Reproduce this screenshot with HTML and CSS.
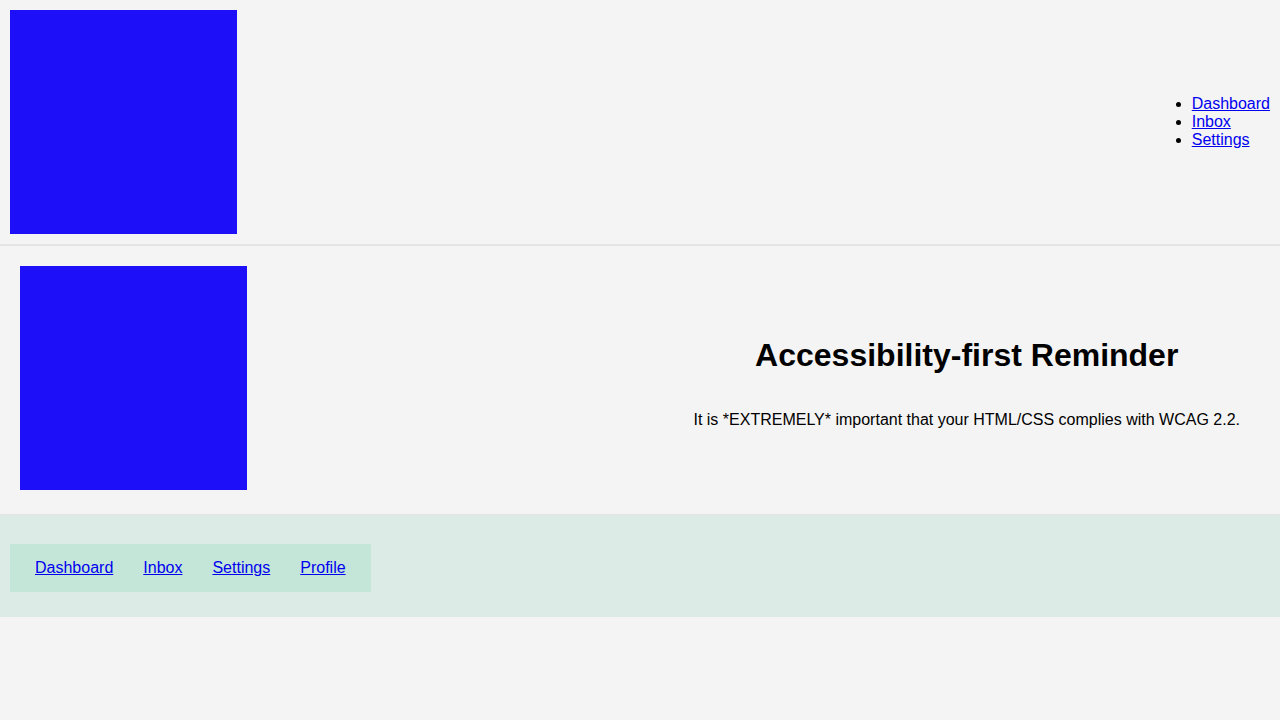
FILE: index.html
```html
<!DOCTYPE html>
<html lang="en">
<head>
<meta charset="utf-8">
<title>Accessibility-first Reminder</title>
<link rel="stylesheet" href="styles.css">
</head>
<body>
<header class="site-header">
  <div class="logo" role="img" aria-label="Logo"></div>
  <nav class="top-nav" aria-label="Main">
    <ul>
      <li><a href="#">Dashboard</a></li>
      <li><a href="#">Inbox</a></li>
      <li><a href="#">Settings</a></li>
    </ul>
  </nav>
</header>
<main>
  <section class="hero">
    <div class="hero-media"><div class="hero-image" role="img" aria-label="Illustration"></div></div>
    <div class="hero-text">
      <h1>Accessibility-first Reminder</h1>
      <p>It is *EXTREMELY* important that your HTML/CSS complies with WCAG 2.2.</p>
    </div>
  </section>
  <section class="sub-nav-wrap">
    <nav class="sub-nav" aria-label="Secondary">
      <a href="#">Dashboard</a>
      <a href="#">Inbox</a>
      <a href="#">Settings</a>
      <a href="#">Profile</a>
    </nav>
  </section>
</main>
</body>
</html>
```
FILE: styles.css
```css
html, body {
  margin: 0;
  padding: 0;
}
body {
  background: #f4f4f4;
  font-family: "Liberation Sans", Arial, sans-serif;
  font-size: 16px;
  color: #000;
}
a {
  color: #0000ee;
}
.site-header {
  display: flex;
  justify-content: space-between;
  align-items: center;
  padding: 10px;
  border-bottom: 2px solid #e4e4e4;
}
.logo {
  width: 227px;
  height: 224px;
  background: #1e0ff9;
}
.top-nav ul {
  margin: 0;
  padding-left: 40px;
  line-height: 18px;
}
.hero {
  display: flex;
  justify-content: space-between;
  align-items: center;
  padding: 20px;
}
.hero-media {
  padding-bottom: 4px;
}
.hero-image {
  width: 227px;
  height: 224px;
  background: #1e0ff9;
}
.hero-text {
  padding: 0 20px;
  text-align: center;
}
.hero-text h1 {
  font-size: 32px;
  line-height: 37px;
  margin: 21.5px 0 37px;
}
.hero-text p {
  margin: 0 0 15px;
  line-height: 18px;
}
.sub-nav-wrap {
  background: #dcebe5;
  border-top: 1px solid #e4e4e4;
  padding: 29px 10px 25px;
}
.sub-nav {
  display: inline-flex;
  background: #c4e6d8;
  padding: 15px 10px;
  line-height: 18px;
}
.sub-nav a {
  padding: 0 15px;
}
```
